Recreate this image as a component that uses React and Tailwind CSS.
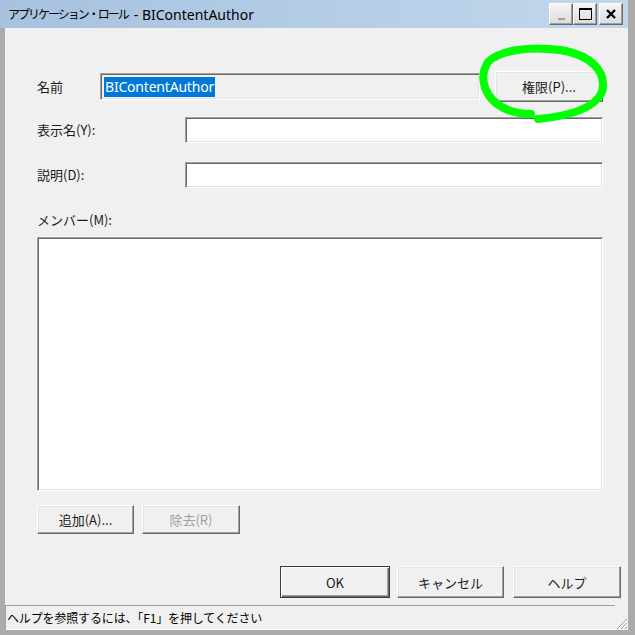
import React from "react";

const jp = { fontFamily: '"Noto Sans CJK JP", "Noto Sans", sans-serif' };

function RaisedButton({ children, className = "", disabled = false, isDefault = false }) {
  return (
    <div
      className={
        "flex items-center justify-center bg-[#f0f0f0] text-[13px] leading-none " +
        (isDefault
          ? "border border-[#3c3c3c] shadow-[inset_1px_1px_0_#ffffff,inset_-1px_-1px_0_#6a6a6a,inset_-2px_-2px_0_#a0a0a0] "
          : "border border-t-white border-l-white border-r-[#696969] border-b-[#696969] shadow-[inset_-1px_-1px_0_#a0a0a0,inset_1px_1px_0_#e3e3e3] ") +
        (disabled ? "text-[#a0a0a0] " : "text-[#1a1a1a] ") +
        className
      }
      style={jp}
    >
      {children}
    </div>
  );
}

function Sunken({ className = "", children }) {
  return (
    <div
      className={
        "border border-t-[#a0a0a0] border-l-[#a0a0a0] border-r-white border-b-white shadow-[inset_1px_1px_0_#696969,inset_-1px_-1px_0_#e3e3e3] " +
        className
      }
    >
      {children}
    </div>
  );
}

function TitleButton({ children }) {
  return (
    <div className="w-[24px] h-[22px] flex items-center justify-center bg-gradient-to-b from-[#f4f4f4] to-[#dcdcdc] border border-t-white border-l-white border-r-[#696969] border-b-[#696969] shadow-[inset_-1px_-1px_0_#a0a0a0]">
      {children}
    </div>
  );
}

export default function App() {
  return (
    <div className="relative w-[635px] h-[635px] bg-[#ababab] flex flex-col overflow-hidden">
      {/* Title bar */}
      <div className="h-[28px] w-[628px] shrink-0 flex items-center bg-gradient-to-r from-[#a7c2df] to-[#c1d7ec] pl-[8px] pr-[5px]">
        <div className="flex-1 flex items-center text-black whitespace-nowrap">
          <span className="text-[12px] tracking-[-2px]" style={jp}>
            アプリケーション・ロール
          </span>
          <span className="text-[14px] ml-[6px]" style={{ fontFamily: '"Noto Sans", sans-serif' }}>
            -&nbsp;BIContentAuthor
          </span>
        </div>
        <div className="flex items-center">
          <TitleButton>
            <div className="w-[7px] h-[2px] bg-[#a0a0a0] mt-[10px]" />
          </TitleButton>
          <TitleButton>
            <div className="w-[13px] h-[12px] border border-black border-t-[2px]" />
          </TitleButton>
          <div className="w-[2px]" />
          <TitleButton>
            <svg width="12" height="12" viewBox="0 0 12 12">
              <path d="M2 2 L10 10 M10 2 L2 10" stroke="#000" strokeWidth="2.4" />
            </svg>
          </TitleButton>
        </div>
      </div>

      {/* Body */}
      <div className="flex-1 ml-[5px] mr-[7px] bg-[#f0f0f0] flex flex-col text-[#1a1a1a]" style={jp}>
        <div className="flex flex-col pl-[32px] pr-[25px] pt-[43px]">
          {/* Name row */}
          <div className="flex items-center h-[31px]">
            <div className="w-[63px] text-[13px]">名前</div>
            <Sunken className="w-[380px] h-[27px] bg-[#f0f0f0] flex items-center pl-[3px]">
              <span className="bg-[#0078d7] text-white text-[14px] leading-[20px] px-[1px] tracking-[-0.2px]" style={{ fontFamily: '"Noto Sans", sans-serif' }}>
                BIContentAuthor
              </span>
            </Sunken>
            <div className="w-[15px]" />
            <RaisedButton className="w-[108px] h-[31px]">権限(P)...</RaisedButton>
          </div>

          {/* Display name */}
          <div className="flex items-center h-[26px] mt-[15px]">
            <div className="w-[148px] text-[13px]">表示名(Y):</div>
            <Sunken className="flex-1 h-[26px] bg-white" />
          </div>

          {/* Description */}
          <div className="flex items-center h-[26px] mt-[19px]">
            <div className="w-[148px] text-[13px]">説明(D):</div>
            <Sunken className="flex-1 h-[26px] bg-white" />
          </div>

          <div className="mt-[23px] h-[18px] text-[13px] leading-[18px]">メンバー(M):</div>
          <Sunken className="mt-[8px] h-[254px] bg-white" />

          <div className="flex mt-[14px] gap-[8px]">
            <RaisedButton className="w-[97px] h-[29px]">追加(A)...</RaisedButton>
            <RaisedButton className="w-[98px] h-[29px]" disabled>
              除去(R)
            </RaisedButton>
          </div>
        </div>

        <div className="flex justify-end mt-[32px] pr-[7px]">
          <RaisedButton className="w-[110px] h-[32px]" isDefault>
            OK
          </RaisedButton>
          <div className="w-[7px]" />
          <RaisedButton className="w-[107px] h-[32px]">キャンセル</RaisedButton>
          <div className="w-[9px]" />
          <RaisedButton className="w-[108px] h-[32px]">ヘルプ</RaisedButton>
        </div>

        {/* Status bar */}
        <div className="flex mt-[7px] h-[25px]">
          <div className="w-[610px] h-full border-t border-l border-[#a0a0a0] border-b border-b-white flex items-center pl-[1px] text-[12px] tracking-[-0.15px] text-black whitespace-nowrap">
            ヘルプを参照するには、「F1」を押してください
          </div>
          <div className="flex-1 flex items-end justify-end">
            <svg width="13" height="13" viewBox="0 0 13 13">
              <path d="M12 2 L2 12 M12 6 L6 12 M12 10 L10 12" stroke="#9a9a9a" strokeWidth="1" />
              <path d="M12 3 L3 12 M12 7 L7 12" stroke="#ffffff" strokeWidth="1" />
            </svg>
          </div>
        </div>
      </div>
      <div className="h-[5px] shrink-0" />

      {/* Green annotation */}
      <svg className="absolute left-0 top-0 pointer-events-none" width="635" height="635" viewBox="0 0 635 635">
        <path
          d="M538 119 C570 116, 595 108, 602 92 C607 72, 592 55, 560 50 C530 46, 500 50, 488 62 C478 78, 484 100, 508 110 C515 113, 524 114, 531 114"
          fill="none"
          stroke="#00ff00"
          strokeWidth="8"
          strokeLinecap="round"
        />
      </svg>
    </div>
  );
}
